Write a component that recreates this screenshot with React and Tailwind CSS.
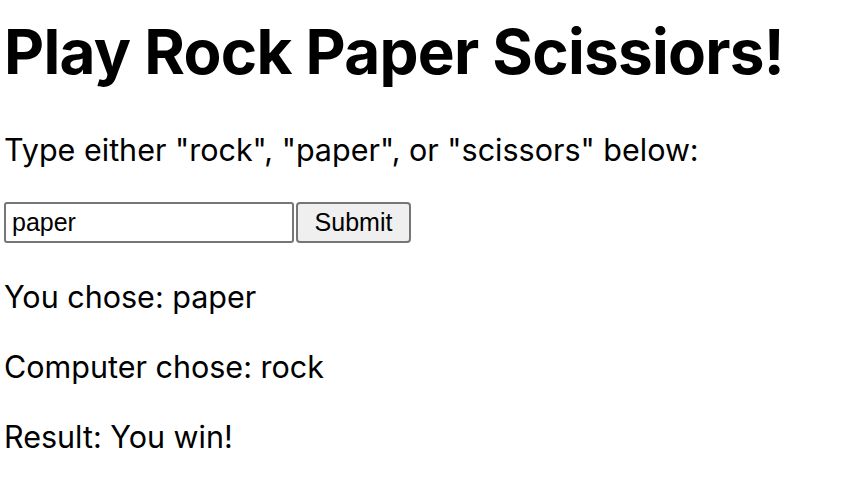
export default function App() {
  return (
    <div className="min-h-[500px] bg-white px-1 text-black">
      <div className="font-['Inter',sans-serif]">
        <h1 className="pt-[14px] text-[62px] font-bold leading-[75px] tracking-[-0.75px]">
          Play Rock Paper Scissiors!
        </h1>
        <p className="mt-[42px] text-[30.5px] leading-[37px]">
          Type either "rock", "paper", or "scissors" below:
        </p>
        <div className="mt-[34px] flex items-center gap-[2px]">
          <input
            className="h-[41px] w-[290px] rounded-[3px] border-2 border-[#767676] bg-white px-[6px] font-['Liberation_Sans',Arial,sans-serif] text-[25px] text-black outline-none"
            defaultValue="paper"
          />
          <button className="h-[41px] w-[115px] rounded-[4px] border-2 border-[#767676] bg-[#efefef] font-['Liberation_Sans',Arial,sans-serif] text-[25px] text-black">
            Submit
          </button>
        </div>
        <p className="mt-[35px] text-[30.5px] leading-[37px]">You chose: paper</p>
        <p className="mt-[33px] text-[30.5px] leading-[37px]">Computer chose: rock</p>
        <p className="mt-[33px] text-[30.5px] leading-[37px]">Result: You win!</p>
      </div>
    </div>
  );
}
